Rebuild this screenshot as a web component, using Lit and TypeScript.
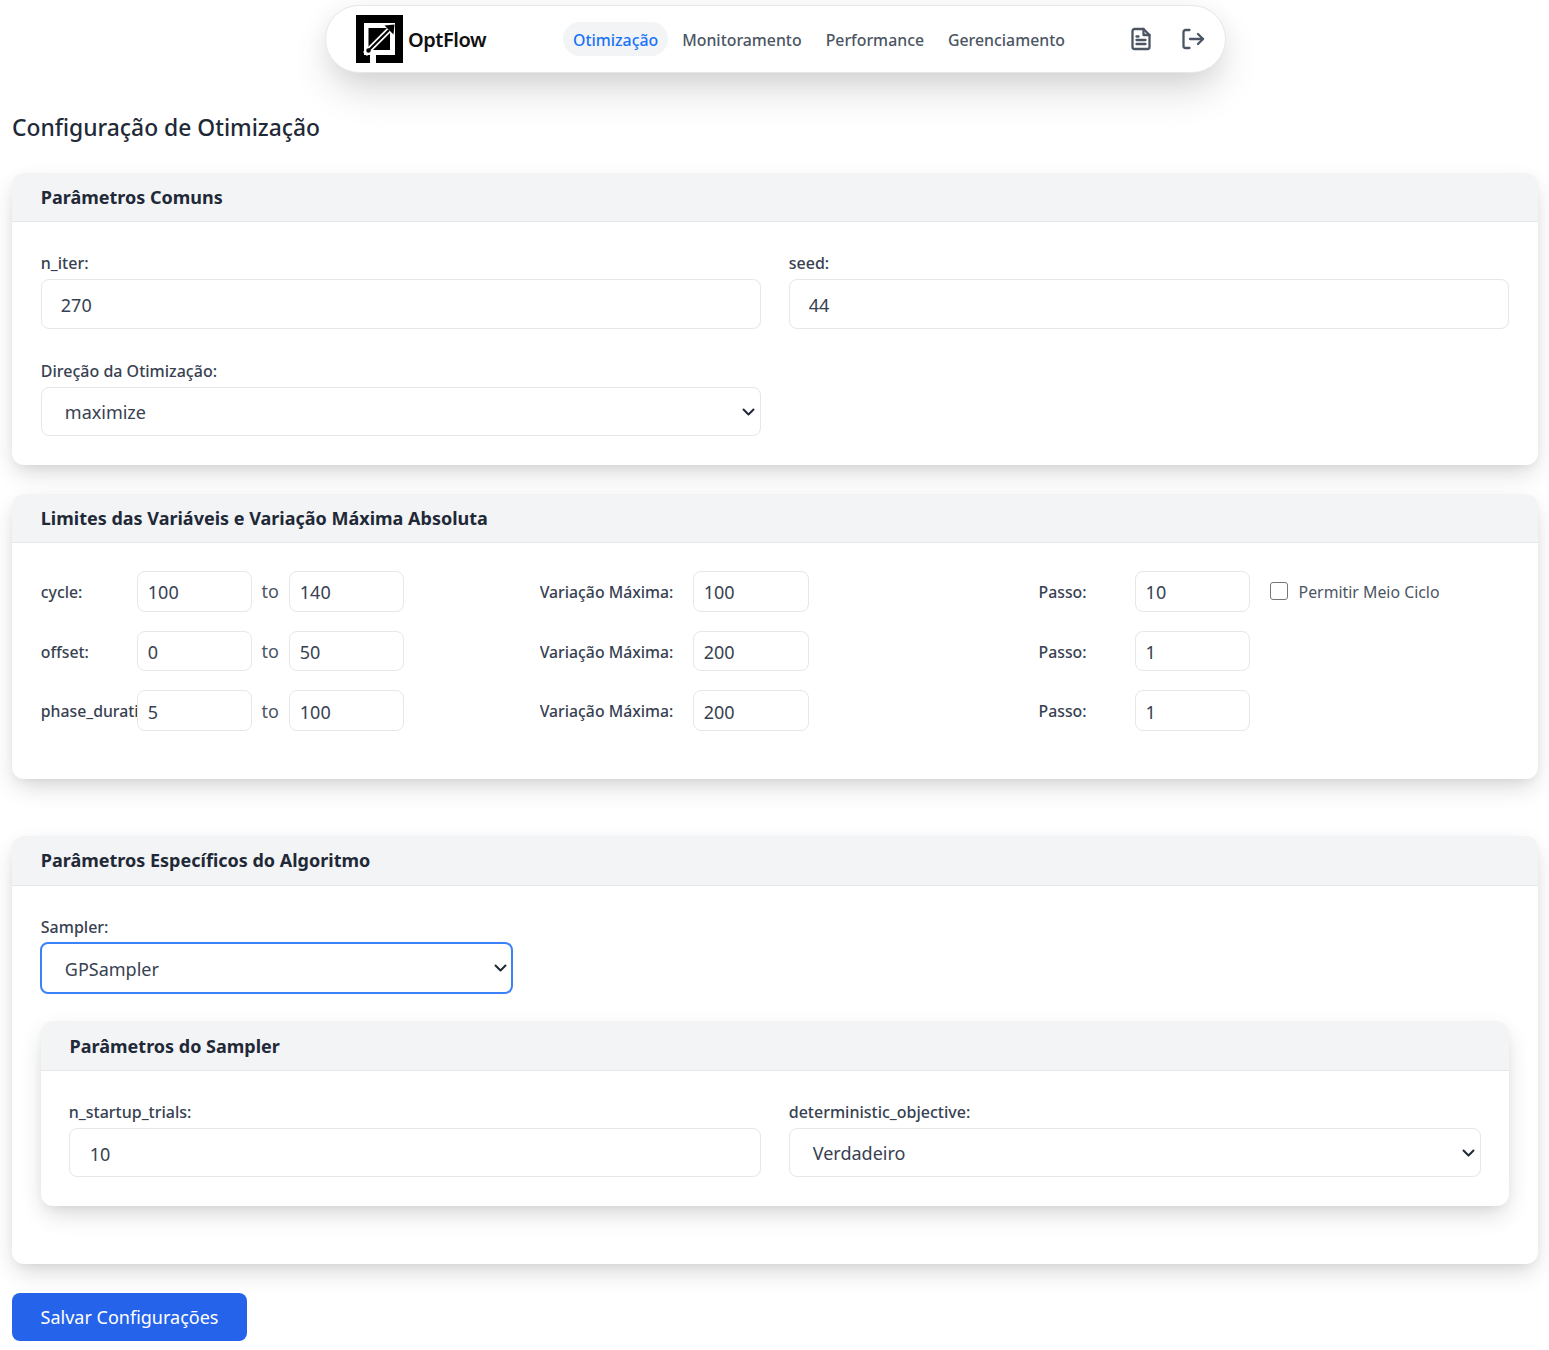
import { LitElement, css, html } from 'lit'
import { customElement } from 'lit/decorators.js'

const limites = [
  { nome: 'phase_duration:', min: '5', max: '100', variacao: '200', passo: '1' },
]

@customElement('app-root')
export class AppRoot extends LitElement {
  static styles = css`
    :host {
      display: block;
      box-sizing: border-box;
      height: 1350px;
      padding: 5px 11.5px 0 12px;
      font-family: "Noto Sans", sans-serif;
      color: #1f2937;
      background: #fff;
      overflow: hidden;
    }
    * { box-sizing: border-box; }

    /* barra de navegacao */
    .nav {
      width: 901px;
      height: 68px;
      margin: 0 0 0 313px;
      display: flex;
      align-items: center;
      padding: 0 20px 0 30px;
      background: #fff;
      border: 1px solid #e5e7eb;
      border-radius: 34px;
      box-shadow: 0 20px 40px -5px rgba(0,0,0,.16), 0 4px 24px rgba(0,0,0,.05);
    }
    .logo { display: flex; align-items: center; gap: 5px; width: 207px; flex: none; }
    .logo svg { display: block; flex: none; }
    .logo span { font-size: 20px; font-weight: 600; color: #111; letter-spacing: -0.45px; }
    .links { display: flex; gap: 4px; flex: none; width: 559px; }
    .links a {
      padding: 5px 10px;
      height: 34px;
      line-height: 26px;
      font-size: 15.85px;
      font-weight: 500;
      color: #4b5563;
      border-radius: 17px;
    }
    .links a.ativo { color: #1a73f8; background: #f3f4f6; }
    .acoes { display: flex; gap: 28px; align-items: center; margin-left: 7px; }
    .acoes svg { display: block; }

    h1 {
      margin: 39px 0 28.8px;
      font-size: 22.85px;
      line-height: 32px;
      font-weight: 500;
      color: #1f2937;
    }

    .card {
      background: #fff;
      border-radius: 12px;
      box-shadow: 0 10px 25px -3px rgba(0,0,0,.16), 0 4px 10px -2px rgba(0,0,0,.05);
      margin-bottom: 28.8px;
    }
    .card.longe { margin-bottom: 57.1px; }
    .card-head {
      height: 49.6px;
      padding: 0 28.8px;
      display: flex;
      align-items: center;
      background: #f3f4f6;
      border-bottom: 1px solid #e5e7eb;
      border-radius: 12px 12px 0 0;
      font-size: 18px;
      font-weight: 700;
      color: #1f2937;
    }
    .card-body { padding: 28.8px; }
    .card-body.limites { padding-top: 27.8px; padding-bottom: 48px; }

    .grid2 { display: grid; grid-template-columns: 1fr 1fr; gap: 30px 28px; }
    label.campo { display: block; font-size: 16px; line-height: 24px; font-weight: 500; color: #374151; margin-bottom: 4px; }
    input[type="text"], select {
      display: block;
      width: 100%;
      font: inherit;
      font-size: 18px;
      color: #374151;
      background: #fff;
      border: 1px solid #e5e7eb;
      border-radius: 8px;
      outline: none;
    }
    input.grande { height: 50px; padding: 2px 19px 0; }
    select { height: 49px; padding: 1px 23px 0; appearance: none; }
    .seletor { position: relative; }
    .seletor svg { position: absolute; right: 6px; top: 50%; margin-top: -4px; }
    .seletor.foco { width: 473px; margin-left: -1px; }
    .seletor.foco select { height: 52px; padding-top: 2px; border: 2px solid #3b82f6; }
    .sampler { margin-bottom: 27.5px; padding-top: 0.5px; }
    .sampler label.campo { margin-bottom: 3px; }

    .linhas { display: flex; flex-direction: column; gap: 19px; }
    .linha { display: grid; grid-template-columns: repeat(3, 1fr); column-gap: 28.8px; height: 40.6px; }
    .grupo { display: flex; align-items: center; min-width: 0; }
    .rotulo {
      width: 96px;
      flex: none;
      overflow: hidden;
      white-space: nowrap;
      padding-top: 1px;
      font-size: 15.8px;
      font-weight: 500;
      color: #374151;
    }
    .rotulo.var { width: 153px; }
    input.mini { width: 115px; height: 40.6px; flex: none; padding: 2px 10px 0; }
    input.mini.largo { width: 116px; }
    .ate { width: 37px; flex: none; text-align: center; font-size: 18px; color: #4b5563; }
    .check { display: flex; align-items: center; margin-left: 20px; padding-top: 1px; font-size: 15.85px; color: #4b5563; white-space: nowrap; }
    .check i { display: block; width: 18px; height: 18px; margin-top: -2px; border: 1.5px solid #767676; border-radius: 3px; margin-right: 11px; }

    .aninhado { margin-bottom: 0; }
    .aninhado .card-body { padding: 29px 28px 28.8px; }
    .aninhado input.grande, .aninhado select { height: 49px; }
    .aninhado input.grande { padding-left: 20px; }
    .final > .card-body { padding-bottom: 58px; }

    .salvar {
      display: block;
      width: 235px;
      height: 48px;
      font: inherit;
      font-size: 18px;
      color: #fff;
      background: #2563eb;
      border: 0;
      border-radius: 8px;
    }
  `

  render() {
    return html`
      <nav class="nav">
        <div class="logo">
          <svg width="47" height="48" viewBox="0 0 47 48">
            <rect width="47" height="48" fill="#000"/>
            <path d="M8 8h31v32H20v8h-6V40H8z" fill="#fff"/>
            <rect x="12.500" y="13" width="21.500" height="22" fill="#000"/>
            <path d="M9 39L37 11" fill="none" stroke="#fff" stroke-width="5.500"/>
            <path d="M12 36L33 15" fill="none" stroke="#000" stroke-width="2.200"/>
            <circle cx="12.500" cy="35.500" r="2.200" fill="#000"/>
            <path d="M38.500 9.500L37.500 19.500L28.500 10.500z" fill="#000"/>
          </svg>
          <span>OptFlow</span>
        </div>
        <div class="links">
          <a class="ativo">Otimização</a>
          <a>Monitoramento</a>
          <a>Performance</a>
          <a>Gerenciamento</a>
        </div>
        <div class="acoes">
          <svg width="24" height="24" viewBox="0 0 24 24" fill="none" stroke="#4b5563" stroke-width="2.300" stroke-linecap="round" stroke-linejoin="round">
            <path d="M14.500 2H5.500a2 2 0 0 0-2 2v16a2 2 0 0 0 2 2h13a2 2 0 0 0 2-2V8z"/>
            <path d="M14.500 2v6h6"/>
            <path d="M7.500 13h9M7.500 17h9M7.500 9.500h2"/>
          </svg>
          <svg width="24" height="24" viewBox="0 0 24 24" fill="none" stroke="#4b5563" stroke-width="2.300" stroke-linecap="round" stroke-linejoin="round">
            <path d="M8.500 3H4.500a2 2 0 0 0-2 2v14a2 2 0 0 0 2 2h4"/>
            <path d="M17 7l5 5-5 5"/>
            <path d="M22 12H9"/>
          </svg>
        </div>
      </nav>

      <h1>Configuração de Otimização</h1>

      <section class="card">
        <div class="card-head">Parâmetros Comuns</div>
        <div class="card-body grid2">
          <div>
            <label class="campo">n_iter:</label>
            <input class="grande" type="text" .value=${'270'} />
          </div>
          <div>
            <label class="campo">seed:</label>
            <input class="grande" type="text" .value=${'44'} />
          </div>
          <div>
            <label class="campo">Direção da Otimização:</label>
            ${this.seletor('maximize', false)}
          </div>
        </div>
      </section>

      <section class="card longe">
        <div class="card-head">Limites das Variáveis e Variação Máxima Absoluta</div>
        <div class="card-body limites linhas">
          ${this.linha('cycle:', '100', '140', '100', '10', true)}
          ${this.linha('offset:', '0', '50', '200', '1', false)}
          ${limites.map((l) => this.linha(l.nome, l.min, l.max, l.variacao, l.passo, false))}
        </div>
      </section>

      <section class="card final">
        <div class="card-head">Parâmetros Específicos do Algoritmo</div>
        <div class="card-body">
          <div class="sampler">
            <label class="campo">Sampler:</label>
            ${this.seletor('GPSampler', true)}
          </div>
          <section class="card aninhado">
            <div class="card-head">Parâmetros do Sampler</div>
            <div class="card-body grid2">
              <div>
                <label class="campo">n_startup_trials:</label>
                <input class="grande" type="text" .value=${'10'} />
              </div>
              <div>
                <label class="campo">deterministic_objective:</label>
                ${this.seletor('Verdadeiro', false)}
              </div>
            </div>
          </section>
        </div>
      </section>

      <button class="salvar">Salvar Configurações</button>
    `
  }

  seletor(valor: string, foco: boolean) {
    return html`
      <div class="seletor ${foco ? 'foco' : ''}">
        <select><option>${valor}</option></select>
        <svg width="13" height="8" viewBox="0 0 13 8" fill="none" stroke="#1f2937" stroke-width="2" stroke-linecap="round" stroke-linejoin="round">
          <path d="M1.500 1.500L6.500 6.500L11.500 1.500"/>
        </svg>
      </div>
    `
  }

  linha(nome: string, min: string, max: string, variacao: string, passo: string, meio: boolean) {
    return html`
      <div class="linha">
        <div class="grupo">
          <span class="rotulo">${nome}</span>
          <input class="mini" type="text" .value=${min} />
          <span class="ate">to</span>
          <input class="mini" type="text" .value=${max} />
        </div>
        <div class="grupo">
          <span class="rotulo var">Variação Máxima:</span>
          <input class="mini largo" type="text" .value=${variacao} />
        </div>
        <div class="grupo">
          <span class="rotulo">Passo:</span>
          <input class="mini" type="text" .value=${passo} />
          ${meio ? html`<span class="check"><i></i>Permitir Meio Ciclo</span>` : ''}
        </div>
      </div>
    `
  }
}
